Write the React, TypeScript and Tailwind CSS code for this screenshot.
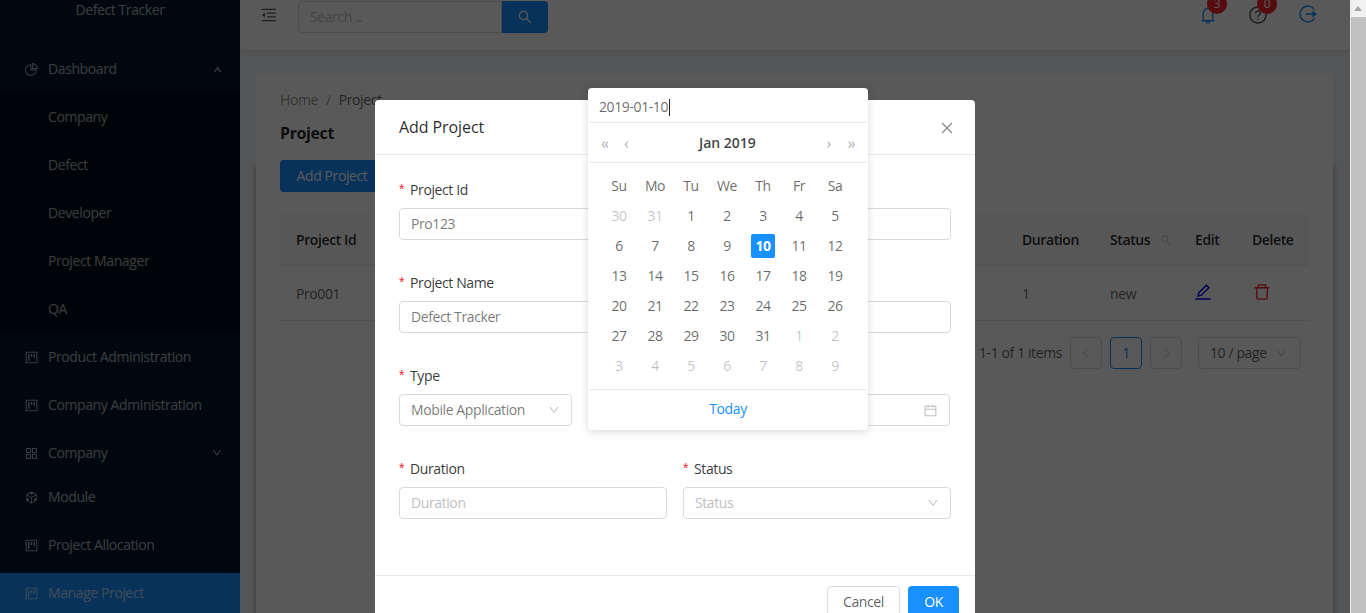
import React from "react";
import {
  AiOutlinePieChart, AiOutlineProject, AiOutlineAppstore, AiOutlineCodeSandbox, AiOutlineUp, AiOutlineDown,
  AiOutlineMenuFold, AiOutlineSearch, AiOutlineBell, AiOutlineQuestionCircle, AiOutlineEdit, AiOutlineDelete,
  AiOutlineCalendar, AiOutlineClose, AiOutlineLeft, AiOutlineRight,
} from "react-icons/ai";

const font = "font-['Open_Sans',sans-serif] tracking-[-0.025em]";

function MenuRow({ icon, label, arrow, selected, last }: { icon?: React.ReactNode; label: string; arrow?: React.ReactNode; selected?: boolean; last?: boolean }) {
  return (
    <div className={`h-10 flex items-center pl-6 pr-[18px] text-sm ${last ? "" : "mb-1"} ${selected ? "bg-[#1890ff] text-white/65" : "text-white/65"}`}>
      <span className="w-6 shrink-0 text-[15px]">{icon}</span>
      <span className="flex-1 whitespace-nowrap">{label}</span>
      {arrow}
    </div>
  );
}

function Sidebar() {
  return (
    <aside className="w-[240px] h-full shrink-0 bg-[#001529] flex flex-col">
      <div className="h-[20px] flex items-center justify-center text-sm text-white/65">Defect Tracker</div>
      <div className="h-[29px]" />
      <MenuRow icon={<AiOutlinePieChart className="text-[15px]" />} label="Dashboard" arrow={<AiOutlineUp className="text-[9px] stroke-[60]" />} />
      <div className="bg-[#000c17] py-1 mb-1 flex flex-col gap-2">
        {["Company", "Defect", "Developer", "Project Manager", "QA"].map((s) => (
          <div key={s} className="h-10 flex items-center pl-12 text-sm text-white/65">{s}</div>
        ))}
      </div>
      <div className="flex flex-col gap-1">
        <div className="mb-1"><MenuRow last icon={<AiOutlineProject />} label="Product Administration" /></div>
        <div className="mb-1"><MenuRow last icon={<AiOutlineProject />} label="Company Administration" /></div>
        <MenuRow last icon={<AiOutlineAppstore />} label="Company" arrow={<AiOutlineDown className="text-[10px] stroke-[30]" />} />
        <div className="mb-1"><MenuRow last icon={<AiOutlineCodeSandbox />} label="Module" /></div>
        <div className="mb-1"><MenuRow last icon={<AiOutlineProject />} label="Project Allocation" /></div>
        <MenuRow last selected icon={<AiOutlineProject />} label="Manage Project" />
      </div>
    </aside>
  );
}

function Badge({ n }: { n: number }) {
  return (
    <span className="absolute -top-[11px] left-[9px] w-5 h-5 rounded-full bg-[#f5222d] text-white text-xs flex items-center justify-center">{n}</span>
  );
}

function Header() {
  return (
    <header className="h-[50px] shrink-0 bg-white shadow-[0_1px_4px_rgba(0,21,41,0.08)] flex items-start relative">
      <AiOutlineMenuFold className="text-[18px] text-black/65 ml-[20px] mt-[6px]" />
      <div className="ml-[20px] mt-px flex h-8 w-[250px]">
        <div className="flex-1 border border-[#d9d9d9] rounded-l-[4px] pl-[11px] flex items-center text-sm text-[#bfbfbf]">Search ..</div>
        <div className="w-[46px] bg-[#1890ff] rounded-r-[4px] flex items-center justify-center text-white text-[16px]"><AiOutlineSearch /></div>
      </div>
      <div className="flex-1" />
      <div className="relative mt-[5px] mr-[30px] w-[20px]"><AiOutlineBell className="text-[20px] text-[#1890ff]" /><Badge n={3} /></div>
      <div className="relative mt-[5px] mr-[31px] w-[20px]"><AiOutlineQuestionCircle className="text-[20px] text-black/65" /><Badge n={0} /></div>
      <svg className="mt-[5px] mr-[33px]" width="18" height="18" viewBox="0 0 18 18" fill="none" stroke="#1890ff" strokeWidth="1.4">
        <path d="M15.6 4.6A8 8 0 1 0 15.6 13.4" />
        <path d="M7 9h10" strokeWidth="1.6" />
        <path d="M14.2 6.8 17 9l-2.8 2.2z" fill="#1890ff" />
      </svg>
    </header>
  );
}

function Background() {
  const th = "text-sm font-semibold text-black/85";
  return (
    <main className="flex-1 min-w-0 flex flex-col bg-[#f0f2f5]">
      <Header />
      <div className="pl-4 pr-[17px] pt-[23px] flex-1">
        <div className="bg-white h-[600px]">
          <div className="h-[87px] pl-6 pt-[16px]">
            <div className="text-sm text-black/45 h-[21px] flex items-center whitespace-nowrap">Home<span className="mx-2">/</span><span className="text-black/65">Project</span></div>
            <div className="mt-[11px] text-base font-bold text-black/85 leading-[24px]">Project</div>
          </div>
          <div className="bg-white shadow-[0_6px_5px_rgba(0,0,0,0.35)] h-[500px] px-6">
            <div className="w-[104px] h-8 rounded-[4px] bg-[#1890ff] text-white text-sm flex items-center justify-center">Add Project</div>
            <div className="mt-[22px] h-[52px] bg-[#fafafa] border-b border-[#e8e8e8] flex items-center relative">
              <span className={`${th} ml-4`}>Project Id</span>
              <span className={`${th} ml-auto w-[88px]`}>Duration</span>
              <span className={`${th} w-[85px] flex items-center`}>Status<AiOutlineSearch className="text-[12px] ml-[10px] text-[#bfbfbf]" /></span>
              <span className={`${th} w-[57px]`}>Edit</span>
              <span className={`${th} w-[57px]`}>Delete</span>
            </div>
            <div className="h-[55px] border-b border-[#e8e8e8] flex items-center text-sm text-black/65">
              <span className="ml-4 pt-[2px]">Pro001</span>
              <span className="ml-auto w-[88px] pt-[2px]">1</span>
              <span className="w-[85px] pt-[2px]">new</span>
              <span className="w-[57px] pb-[2px]"><AiOutlineEdit className="text-[20px] -ml-[2px] text-[#0000ee]" /></span>
              <span className="w-[57px] pb-[2px]"><AiOutlineDelete className="text-[20px] text-[#f5222d]" /></span>
            </div>
            <div className="mt-4 flex items-center justify-end pr-2 text-sm text-black/65">
              <span className="mr-2">1-1 of 1 items</span>
              <span className="w-8 h-8 border border-[#d9d9d9] rounded-[4px] flex items-center justify-center text-[#d9d9d9] text-[13px]"><AiOutlineLeft /></span>
              <span className="ml-2 w-8 h-8 border border-[#1890ff] rounded-[4px] flex items-center justify-center text-[#1890ff]">1</span>
              <span className="ml-2 w-8 h-8 border border-[#d9d9d9] rounded-[4px] flex items-center justify-center text-[#d9d9d9] text-[13px]"><AiOutlineRight /></span>
              <span className="ml-4 w-[103px] h-8 border border-[#d9d9d9] rounded-[4px] flex items-center pl-[11px]">10 / page<AiOutlineDown className="ml-[9px] text-[11px] text-[#bfbfbf]" /></span>
            </div>
          </div>
        </div>
      </div>
    </main>
  );
}

function Label({ text }: { text: string }) {
  return (
    <div className="h-[21px] flex items-center text-sm text-black/80 whitespace-nowrap">
      <span className="text-[#f5222d] mr-[6px] -mt-[2px] font-['Liberation_Sans',sans-serif]">*</span>{text}
    </div>
  );
}

function Field({ value, placeholder, arrow, icon, className }: { value?: string; placeholder?: string; arrow?: boolean; icon?: boolean; className?: string }) {
  return (
    <div className={`h-8 mt-2 border border-[#d9d9d9] rounded-[4px] pl-[11px] pr-[11px] flex items-center text-sm ${className ?? ""}`}>
      <span className={`flex-1 whitespace-nowrap ${value ? "text-black/55" : "text-[#bfbfbf]"}`}>{value ?? placeholder}</span>
      {arrow && <AiOutlineDown className="text-[12px] text-[#bfbfbf]" />}
      {icon && <AiOutlineCalendar className="text-[15px] text-[#bfbfbf]" />}
    </div>
  );
}

function Modal() {
  return (
    <section className="w-[600px] h-[560px] mt-[100px] shrink-0 bg-white rounded-[4px] flex flex-col">
      <div className="h-[55px] shrink-0 border-b border-[#e8e8e8] flex items-center pl-6 pr-[20px]">
        <span className="flex-1 text-base font-medium text-black/85 tracking-[-0.005em]">Add Project</span>
        <AiOutlineClose className="text-[16px] text-black/45 mt-[2px]" />
      </div>
      <div className="h-[420px] shrink-0 px-6 pt-[24px] flex flex-col gap-[32px]">
        <div className="grid grid-cols-2 gap-x-4">
          <div><Label text="Project Id" /><Field value="Pro123" /></div>
          <div><Label text="Project Manager" /><Field placeholder="Project Manager" /></div>
        </div>
        <div className="grid grid-cols-2 gap-x-4">
          <div><Label text="Project Name" /><Field value="Defect Tracker" /></div>
          <div><Label text="Company" /><Field placeholder="Company" /></div>
        </div>
        <div className="flex gap-4 w-[551px]">
          <div className="w-[173px] shrink-0"><Label text="Type" /><Field value="Mobile Application" arrow /></div>
          <div className="flex-1"><Label text="Start Date" /><Field placeholder="" icon /></div>
        </div>
        <div className="grid grid-cols-2 gap-x-4">
          <div><Label text="Duration" /><Field placeholder="Duration" /></div>
          <div><Label text="Status" /><Field placeholder="Status" arrow /></div>
        </div>
      </div>
      <div className="border-t border-[#e8e8e8] flex justify-end gap-2 pt-[10px] pr-4 text-sm">
        <span className="w-[73px] h-8 border border-[#d9d9d9] rounded-[4px] flex items-center justify-center text-black/65">Cancel</span>
        <span className="w-[51px] h-8 bg-[#1890ff] rounded-[4px] flex items-center justify-center text-white">OK</span>
      </div>
    </section>
  );
}

function CalendarPopup() {
  const weeks = [
    [30, 31, 1, 2, 3, 4, 5], [6, 7, 8, 9, 10, 11, 12], [13, 14, 15, 16, 17, 18, 19],
    [20, 21, 22, 23, 24, 25, 26], [27, 28, 29, 30, 31, 1, 2], [3, 4, 5, 6, 7, 8, 9],
  ];
  return (
    <div className="absolute left-[588px] top-[88px] w-[280px] h-[342px] bg-white rounded-[4px] shadow-[0_2px_8px_rgba(0,0,0,0.15)] flex flex-col text-sm text-black/60">
      <div className="h-[35px] shrink-0 mx-px border-b border-[#e8e8e8] pl-[10px] pt-1 flex items-center">
        <span>2019-01-10</span><span className="w-px h-[17px] ml-px bg-black/85" />
      </div>
      <div className="h-10 shrink-0 mx-px border-b border-[#e8e8e8] flex items-center px-3 text-black/35 text-base">
        <span className="w-[23px]">«</span><span>‹</span>
        <span className="flex-1 text-center text-sm font-semibold text-black/75 tracking-normal">Jan 2019</span>
        <span className="w-[21px]">›</span><span>»</span>
      </div>
      <div className="pl-[13px] pr-[15px] pt-[8px] h-[226px] shrink-0">
        <div className="grid grid-cols-7 h-[30px]">
          {["Su", "Mo", "Tu", "We", "Th", "Fr", "Sa"].map((d) => (
            <span key={d} className="flex items-center justify-center">{d}</span>
          ))}
        </div>
        {weeks.map((w, i) => (
          <div key={i} className="grid grid-cols-7 h-[30px]">
            {w.map((d, j) => {
              const out = (i === 0 && d > 20) || (i >= 4 && d < 20);
              const sel = i === 1 && d === 10;
              return (
                <span key={j} className="flex items-center justify-center">
                  <span className={`w-6 h-6 rounded-[2px] flex items-center justify-center ${sel ? "bg-[#1890ff] text-white font-bold" : out ? "text-black/25" : ""}`}>{d}</span>
                </span>
              );
            })}
          </div>
        ))}
      </div>
      <div className="flex-1 mx-px pb-[2px] border-t border-[#e8e8e8] flex items-center justify-center text-[#1890ff]">Today</div>
    </div>
  );
}

function Scrollbar() {
  return (
    <div className="w-4 h-full shrink-0 bg-[#f1f1f1] flex flex-col items-center">
      <div className="h-[17px] flex items-center justify-center">
        <span className="w-0 h-0 border-l-[4px] border-r-[4px] border-b-[5px] border-l-transparent border-r-transparent border-b-[#a3a3a3]" />
      </div>
      <div className="ml-px w-[15px] flex-1 bg-[#c1c1c1]" />
    </div>
  );
}

export default function App() {
  return (
    <div className={`relative w-[1366px] h-[613px] overflow-hidden flex ${font}`}>
      <Sidebar />
      <Background />
      <Scrollbar />
      <div className="absolute top-0 left-0 right-4 bottom-0 bg-black/65 flex justify-center">
        <Modal />
      </div>
      <CalendarPopup />
    </div>
  );
}
